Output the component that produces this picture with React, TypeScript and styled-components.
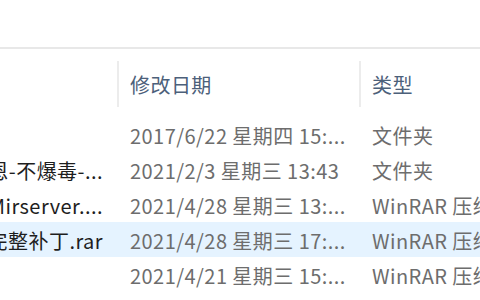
import React from "react";
import styled, { createGlobalStyle } from "styled-components";

const Global = createGlobalStyle`
  html, body { margin: 0; padding: 0; background: #ffffff; }
  body { width: 480px; height: 300px; overflow: hidden; }
`;

const Window = styled.div`
  width: 480px;
  height: 300px;
  overflow: hidden;
  background: #ffffff;
  font-family: "Noto Sans CJK SC", "Noto Sans", sans-serif;
  font-size: 20px;
  letter-spacing: 0.45px;
  display: flex;
  flex-direction: column;
`;

const TopArea = styled.div`
  height: 47px;
  flex: none;
  border-bottom: 2px solid #e8e8e8;
`;

const Grid = styled.div`
  display: grid;
  grid-template-columns: 117px 242px 1fr;
`;

const HeaderRow = styled(Grid)`
  padding: 12px 0 10px;
  height: 46px;
`;

const HeaderCell = styled.div<{ $sep?: boolean }>`
  display: flex;
  align-items: center;
  padding-left: 11px;
  border-left: 2px solid ${(p) => (p.$sep ? "#ececec" : "transparent")};
  color: #4c607a;
  white-space: nowrap;
  overflow: hidden;
`;

const Row = styled(Grid)<{ $selected?: boolean }>`
  height: 35px;
  padding-top: 1px;
  box-sizing: border-box;
  background: ${(p) => (p.$selected ? "#e5f3ff" : "transparent")};
`;

const NameCell = styled.div`
  display: flex;
  align-items: center;
  justify-content: flex-end;
  padding-right: 14px;
  overflow: hidden;
  white-space: nowrap;
  color: #1e1e1e;
`;

const Cell = styled.div`
  display: flex;
  align-items: center;
  padding-left: 13px;
  padding-right: 10px;
  overflow: hidden;
  white-space: nowrap;
  color: #6d6d6d;
`;

const Ellip = styled.span`
  overflow: hidden;
  text-overflow: ellipsis;
  white-space: nowrap;
`;

const Type = styled.span`
  white-space: nowrap;
`;

const rows = [
  { name: "", date: "2017/6/22 星期四 15:...", type: "文件夹" },
  { name: "传奇服务端恩-不爆毒-...", date: "2021/2/3 星期三 13:43", type: "文件夹" },
  { name: "1.76版本Mirserver....", date: "2021/4/28 星期三 13:...", type: "WinRAR 压缩文件" },
  { name: "服务端完整补丁.rar", date: "2021/4/28 星期三 17:...", type: "WinRAR 压缩文件", selected: true },
  { name: "", date: "2021/4/21 星期三 15:...", type: "WinRAR 压缩文件" },
];

export default function App() {
  return (
    <>
      <Global />
      <Window>
        <TopArea />
        <HeaderRow>
          <HeaderCell />
          <HeaderCell $sep>修改日期</HeaderCell>
          <HeaderCell $sep>类型</HeaderCell>
        </HeaderRow>
        {rows.map((r, i) => (
          <Row key={i} $selected={r.selected}>
            <NameCell>{r.name}</NameCell>
            <Cell>
              <Ellip>{r.date}</Ellip>
            </Cell>
            <Cell>
              <Type>{r.type}</Type>
            </Cell>
          </Row>
        ))}
      </Window>
    </>
  );
}
